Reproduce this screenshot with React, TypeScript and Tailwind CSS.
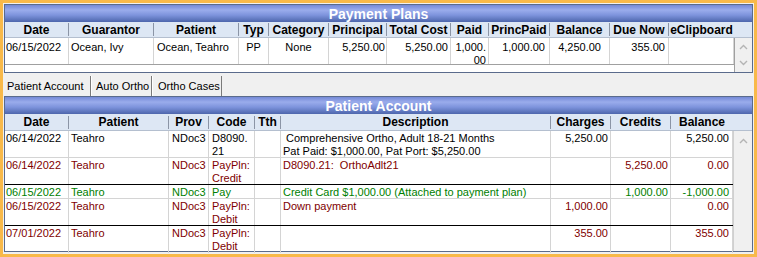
type Col = { label: string; w: string; cell: string; sep?: boolean };

const ppCols: Col[] = [
  { label: "Date", w: "w-[64px]", cell: "text-left pl-px", sep: true },
  { label: "Guarantor", w: "w-[85px]", cell: "text-left pl-[2px]", sep: true },
  { label: "Patient", w: "w-[85px]", cell: "text-left pl-[3px]", sep: true },
  { label: "Typ", w: "w-[30px]", cell: "text-center", sep: true },
  { label: "Category", w: "w-[60px]", cell: "text-center", sep: true },
  { label: "Principal", w: "w-[58px]", cell: "text-right pr-px", sep: true },
  { label: "Total Cost", w: "w-[64px]", cell: "text-right pr-[2px]", sep: true },
  { label: "Paid", w: "w-[38px]", cell: "text-right pr-[2px]", sep: true },
  { label: "PrincPaid", w: "w-[61px]", cell: "text-right pr-[4px]", sep: true },
  { label: "Balance", w: "w-[60px]", cell: "text-right pr-[8px]", sep: true },
  { label: "Due Now", w: "w-[59px]", cell: "text-right pr-[3px]", sep: true },
  { label: "eClipboard", w: "w-[65px]", cell: "text-left", sep: false },
];

const paCols: Col[] = [
  { label: "Date", w: "w-[64px]", cell: "text-left pl-px", sep: true },
  { label: "Patient", w: "w-[100px]", cell: "text-left pl-[2px]", sep: true },
  { label: "Prov", w: "w-[40px]", cell: "text-left pl-[3px]", sep: true },
  { label: "Code", w: "w-[46px]", cell: "text-left pl-[3px]", sep: true },
  { label: "Tth", w: "w-[26px]", cell: "text-left", sep: true },
  { label: "Description", w: "w-[270px]", cell: "text-left pl-[2px] whitespace-pre", sep: true },
  { label: "Charges", w: "w-[60px]", cell: "text-right pr-[2px]", sep: true },
  { label: "Credits", w: "w-[60px]", cell: "text-right pr-[2px]", sep: true },
  { label: "Balance", w: "w-[62px]", cell: "text-right pr-[3px]", sep: false },
];

type Row = { color: string; h: string; line: string; cells: React.ReactNode[] };

const rows: Row[] = [
  {
    color: "text-black",
    h: "h-[27px]",
    line: "border-[#d4d4d4]",
    cells: [
      "06/14/2022",
      "Teahro",
      "NDoc3",
      <>D8090.<br />21</>,
      "",
      <> Comprehensive Ortho, Adult 18-21 Months<br />Pat Paid: $1,000.00, Pat Port: $5,250.00</>,
      "5,250.00",
      "",
      "5,250.00",
    ],
  },
  {
    color: "text-[#800000]",
    h: "h-[27px]",
    line: "border-black",
    cells: [
      "06/14/2022",
      "Teahro",
      "NDoc3",
      <>PayPln:<br />Credit</>,
      "",
      "D8090.21:  OrthoAdlt21",
      "",
      "5,250.00",
      "0.00",
    ],
  },
  {
    color: "text-[#008000]",
    h: "h-[14px]",
    line: "border-[#d4d4d4]",
    cells: [
      "06/15/2022",
      "Teahro",
      "NDoc3",
      "Pay",
      "",
      "Credit Card $1,000.00 (Attached to payment plan)",
      "",
      "1,000.00",
      "-1,000.00",
    ],
  },
  {
    color: "text-[#800000]",
    h: "h-[27px]",
    line: "border-black",
    cells: [
      "06/15/2022",
      "Teahro",
      "NDoc3",
      <>PayPln:<br />Debit</>,
      "",
      "Down payment",
      "1,000.00",
      "",
      "0.00",
    ],
  },
  {
    color: "text-[#800000]",
    h: "flex-1",
    line: "border-transparent",
    cells: [
      "07/01/2022",
      "Teahro",
      "NDoc3",
      <>PayPln:<br />Debit</>,
      "",
      "",
      "355.00",
      "",
      "355.00",
    ],
  },
];

const TitleBar = ({ title }: { title: string }) => (
  <div className="h-[17px] flex items-center justify-center bg-[linear-gradient(to_bottom,#7489d6_0%,#9aacec_30%,#7d93dc_60%,#4d66ac_100%)] text-white font-bold text-[14px] leading-none">
    {title}
  </div>
);

const HeaderRow = ({ cols, h }: { cols: Col[]; h: string }) => (
  <div className={`flex ${h} bg-[#dde7f4] border-b border-[#b4bfcf] text-[12px] font-bold text-black`}>
    {cols.map((c) => (
      <div key={c.label} className={`${c.w} flex items-center`}>
        <span className="flex-1 text-center leading-none whitespace-nowrap">{c.label}</span>
        {c.sep && <span className="w-px h-[13px] bg-[#8b95a6]" />}
      </div>
    ))}
  </div>
);

const Chevron = ({ down }: { down?: boolean }) => (
  <svg width="9" height="6" viewBox="0 0 9 6">
    <polyline
      points={down ? "1,1 4.5,4.5 8,1" : "1,5 4.5,1.5 8,5"}
      fill="none"
      stroke="#b4b4b4"
      strokeWidth="1.4"
    />
  </svg>
);

const App = () => {
  return (
    <div className="w-[757px] h-[257px] border-[3px] border-[#f8b94a] bg-[#f0f0f0] px-px pt-px pb-[2px] flex flex-col font-['Liberation_Sans',Arial,sans-serif] text-[11px] leading-[13px] text-black overflow-hidden">
      {/* payment plans grid */}
      <div className="border border-[#5a6b8c] bg-white flex flex-col">
        <TitleBar title="Payment Plans" />
        <HeaderRow cols={ppCols} h="h-[16px]" />
        <div className="flex h-[34px]">
          <div className="w-[729px] flex flex-col">
            <div className="flex h-[27px] border-b border-[#a0a0a0]">
              {[
                "06/15/2022",
                "Ocean, Ivy",
                "Ocean, Teahro",
                "PP",
                "None",
                "5,250.00",
                "5,250.00",
                <>1,000.<br />00</>,
                "1,000.00",
                "4,250.00",
                "355.00",
                "",
              ].map((v, i) => (
                <div
                  key={i}
                  className={`${ppCols[i].w} ${ppCols[i].cell} pt-[3px] border-r border-[#d4d4d4] whitespace-nowrap`}
                >
                  {v}
                </div>
              ))}
            </div>
          </div>
          <div className="flex-1 bg-[#f0f0f0] border-l border-[#a0a0a0] flex flex-col items-center justify-between py-[6px]">
            <Chevron />
            <Chevron down />
          </div>
        </div>
      </div>

      {/* tabs */}
      <div className="h-[23px] flex items-end">
        <div className="w-[87px] h-[20px] pl-[3px] pt-px flex items-center border-r border-[#7a7a7a]">Patient Account</div>
        <div className="w-[61px] h-[20px] pl-[4px] pt-px flex items-center border-l border-white border-r border-r-[#7a7a7a]">Auto Ortho</div>
        <div className="w-[70px] h-[20px] pl-[5px] pt-px flex items-center border-l border-white border-r border-r-[#7a7a7a]">Ortho Cases</div>
      </div>

      {/* patient account grid */}
      <div className="flex-1 border border-[#5a6b8c] bg-white flex flex-col min-h-0">
        <TitleBar title="Patient Account" />
        <HeaderRow cols={paCols} h="h-[17px]" />
        <div className="flex-1 flex min-h-0">
          <div className="w-[728px] flex flex-col">
            {rows.map((r, ri) => (
              <div key={ri} className={`flex ${r.h} border-b ${r.line} ${r.color}`}>
                {r.cells.map((v, i) => (
                  <div
                    key={i}
                    className={`${paCols[i].w} ${paCols[i].cell} pt-px border-r border-[#d4d4d4] whitespace-nowrap overflow-hidden`}
                  >
                    {v}
                  </div>
                ))}
              </div>
            ))}
          </div>
          <div className="flex-1 bg-[#f0f0f0] border-l border-[#d0d0d0] flex flex-col items-center pt-[7px]">
            <Chevron />
          </div>
        </div>
      </div>
    </div>
  );
};

export default App;
